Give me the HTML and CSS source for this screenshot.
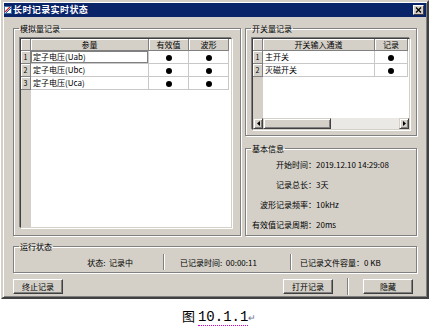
FILE: index.html
```html
<!DOCTYPE html>
<html lang="zh-CN">
<head>
  <meta charset="UTF-8">
  <title>长时记录实时状态</title>
  <link rel="stylesheet" href="styles.css">
</head>
<body>

  <div class="window">
    <div class="titlebar">
      <svg class="app-icon" viewBox="0 0 8 8" width="8" height="8">
        <rect x="0" y="0" width="8" height="8" fill="#fff"/>
        <rect x="0.5" y="0.5" width="7" height="7" fill="none" stroke="#3a6ea5"/>
        <path d="M1 6 L6 1" stroke="#d02020" stroke-width="1.2"/>
        <path d="M2 7 L7 2" stroke="#2050c0" stroke-width="1"/>
      </svg>
      <span class="title">长时记录实时状态</span>
      <span class="close-btn">
        <svg viewBox="0 0 7 6" width="7" height="6"><path d="M1 0.5 L6 5.5 M6 0.5 L1 5.5" stroke="#000" stroke-width="1.3"/></svg>
      </span>
    </div>

    <div class="client">
      <div class="top-row">
        <fieldset class="group analog">
          <legend>模拟量记录</legend>
          <div class="grid">
            <table>
              <colgroup><col style="width:10px"><col style="width:118px"><col style="width:40px"><col style="width:40px"></colgroup>
              <tr><th></th><th>参量</th><th>有效值</th><th>波形</th></tr>
              <tr><td class="rowhead">1</td><td class="name selected">定子电压(Uab)</td><td><span class="dot"></span></td><td><span class="dot"></span></td></tr>
              <tr><td class="rowhead">2</td><td class="name">定子电压(Ubc)</td><td><span class="dot"></span></td><td><span class="dot"></span></td></tr>
              <tr><td class="rowhead">3</td><td class="name">定子电压(Uca)</td><td><span class="dot"></span></td><td><span class="dot"></span></td></tr>
            </table>
          </div>
        </fieldset>

        <div class="right-col">
          <fieldset class="group switch">
            <legend>开关量记录</legend>
            <div class="grid">
              <table>
                <colgroup><col style="width:10px"><col style="width:112px"><col style="width:33px"></colgroup>
                <tr><th></th><th>开关输入通道</th><th>记录</th></tr>
                <tr><td class="rowhead">1</td><td class="name">主开关</td><td><span class="dot"></span></td></tr>
                <tr><td class="rowhead">2</td><td class="name">灭磁开关</td><td><span class="dot"></span></td></tr>
              </table>
              <div class="hscroll">
                <span class="sb-btn"><svg viewBox="0 0 3 5" width="3" height="5"><polygon points="3,0 0,2.5 3,5" fill="#000"/></svg></span>
                <span class="sb-thumb"></span>
                <span class="sb-btn right"><svg viewBox="0 0 3 5" width="3" height="5"><polygon points="0,0 3,2.5 0,5" fill="#000"/></svg></span>
              </div>
            </div>
          </fieldset>

          <fieldset class="group info">
            <legend>基本信息</legend>
            <div class="info-list">
              <span class="k">开始时间：</span><span>2019.12.10 14:29:08</span>
              <span class="k">记录总长：</span><span>3天</span>
              <span class="k">波形记录频率：</span><span>10kHz</span>
              <span class="k">有效值记录周期：</span><span>20ms</span>
            </div>
          </fieldset>
        </div>
      </div>

      <fieldset class="group run">
        <legend>运行状态</legend>
        <div class="panes">
          <span class="pane pane-state">状态:  记录中</span>
          <span class="vsep"></span>
          <span class="pane pane-time">已记录时间:  00:00:11</span>
          <span class="vsep"></span>
          <span class="pane pane-size">已记录文件容量：0 KB</span>
        </div>
      </fieldset>

      <div class="buttons">
        <button>终止记录</button>
        <button class="open-btn">打开记录</button>
        <span class="vsep btn-sep"></span>
        <button>隐藏</button>
      </div>
    </div>
  </div>

  <p class="caption">图 <span class="num">10.1.1</span><span class="ret">↵</span></p>

</body>
</html>
```

FILE: styles.css
```css
body {
  margin: 0;
  background: #fff;
  font-family: "Noto Sans CJK SC", sans-serif;
  font-size: 8px;
  color: #000;
}
.window {
  box-sizing: border-box;
  width: 428px;
  height: 299px;
  margin-left: 1px;
  padding: 1px;
  border: 2px solid;
  border-color: #d4d0c8 #404040 #404040 #d4d0c8;
  box-shadow: inset 1px 1px #fff, inset -1px -1px #808080;
  background: #d4d0c8;
  display: flex;
  flex-direction: column;
}
.titlebar {
  height: 14px;
  flex: none;
  background: #0a246a;
  display: flex;
  align-items: center;
  padding-right: 2px;
  color: #fff;
}
.app-icon {
  margin-right: 1px;
}
.title {
  font-weight: bold;
  font-size: 9px;
  letter-spacing: 0.4px;
  line-height: 14px;
}
.close-btn {
  margin-left: auto;
  box-sizing: border-box;
  width: 11px;
  height: 10px;
  background: #d4d0c8;
  border: 1px solid;
  border-color: #fff #404040 #404040 #fff;
  display: flex;
  align-items: center;
  justify-content: center;
}
.client {
  flex: 1;
  padding: 6px 9px 0;
  display: flex;
  flex-direction: column;
}
.top-row {
  display: flex;
  gap: 4px;
  height: 213px;
  flex: none;
}
fieldset.group {
  box-sizing: border-box;
  margin: 0;
  min-width: 0;
  border: 1px solid #808080;
  box-shadow: inset 1px 1px #fff, 1px 1px #fff;
  padding: 0 0 0 6px;
}
legend {
  padding: 0 1px;
  margin-left: -1px;
  line-height: 11px;
}
fieldset.analog {
  width: 228px;
  padding-top: 4px;
}
.right-col {
  width: 172px;
  display: flex;
  flex-direction: column;
  gap: 7px;
}
fieldset.switch {
  height: 113px;
  padding-top: 4px;
}
fieldset.info {
  height: 93px;
}

/* grid controls */
.grid {
  box-sizing: border-box;
  border: 1px solid;
  border-color: #404040 #d4d0c8 #d4d0c8 #404040;
  box-shadow: -1px -1px #808080, 1px 1px #fff;
  background: linear-gradient(to right, #d4d0c8 10px, #fff 10px);
  display: flex;
  flex-direction: column;
}
.analog .grid {
  width: 212px;
  height: 190px;
}
.switch .grid {
  width: 158px;
  height: 92px;
}
.grid table {
  border-spacing: 0;
  table-layout: fixed;
}
.analog table {
  width: 208px;
}
.switch table {
  width: 155px;
}
.grid th, .grid td {
  padding: 0;
  white-space: nowrap;
  overflow: hidden;
  text-align: center;
}
.grid th, .grid td.rowhead {
  background: #d4d0c8;
  font-weight: normal;
  border-right: 1px solid #808080;
  border-bottom: 1px solid #808080;
  box-shadow: inset 1px 1px #fff;
}
.grid th {
  line-height: 11px;
}
.grid td {
  line-height: 12px;
  border-right: 1px solid #c8c8c8;
  border-bottom: 1px solid #c8c8c8;
}
.grid td.rowhead {
  font-size: 7px;
}
.grid td.name {
  text-align: left;
  padding-left: 2px;
}
.grid td.selected {
  box-shadow: inset 0 0 0 1px #808080;
}
.dot {
  display: inline-block;
  width: 6px;
  height: 6px;
  border-radius: 50%;
  background: #000;
  vertical-align: middle;
}
.hscroll {
  margin-top: auto;
  height: 11px;
  display: flex;
  background: #ebe9e5;
}
.sb-btn, .sb-thumb {
  box-sizing: border-box;
  background: #d4d0c8;
  border: 1px solid;
  border-color: #d4d0c8 #404040 #404040 #d4d0c8;
  box-shadow: inset 1px 1px #fff, inset -1px -1px #808080;
}
.sb-btn {
  width: 10px;
  display: flex;
  align-items: center;
  justify-content: center;
}
.sb-btn.right {
  margin-left: auto;
}
.sb-thumb {
  width: 68px;
}

/* basic info */
.info-list {
  display: grid;
  grid-template-columns: 64px auto;
  grid-auto-rows: 20px;
  align-items: center;
}
.info-list .k {
  text-align: right;
}

/* run status */
fieldset.run {
  height: 32px;
  margin-top: 5px;
  flex: none;
}
.panes {
  display: flex;
  align-items: center;
  height: 20px;
}
.pane {
  box-sizing: border-box;
  white-space: pre;
}
.pane-state {
  width: 143px;
  padding-right: 30px;
  text-align: right;
}
.pane-time {
  width: 125px;
  padding-left: 15px;
}
.pane-size {
  padding-left: 8px;
}
.vsep {
  width: 0;
  height: 16px;
  border-left: 1px solid #808080;
  border-right: 1px solid #fff;
}

/* buttons */
.buttons {
  display: flex;
  align-items: center;
  margin-top: 5px;
  padding-right: 4px;
}
button {
  box-sizing: border-box;
  width: 50px;
  height: 15px;
  padding: 0;
  font: 8px "Noto Sans CJK SC", sans-serif;
  color: #000;
  background: #d4d0c8;
  border: 1px solid;
  border-color: #fff #404040 #404040 #fff;
  box-shadow: inset -1px -1px #808080;
}
.open-btn {
  margin-left: auto;
}
.btn-sep {
  height: 17px;
  margin: 0 14px 0 14px;
}

.caption {
  margin: 9px 0 0 182px;
  font-size: 13px;
  line-height: 16px;
}
.caption .num {
  font-family: "Liberation Mono", monospace;
  font-size: 14px;
  border-bottom: 1px dotted #d000d0;
}
.caption .ret {
  font-size: 9px;
  color: #707090;
}
```
